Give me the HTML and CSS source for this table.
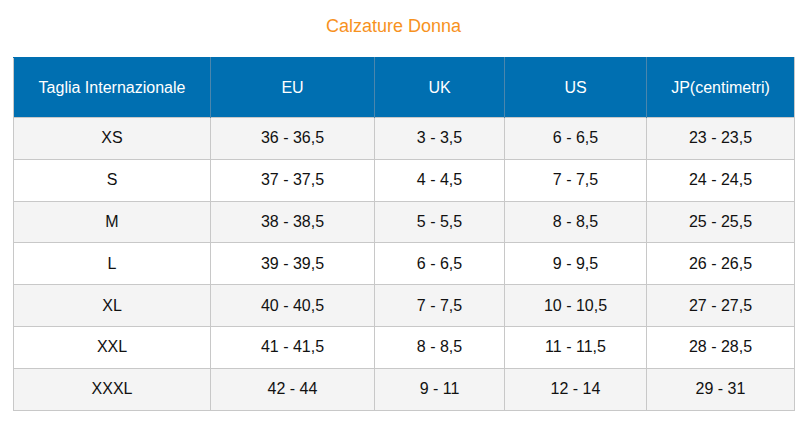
FILE: index.html
```html
<!DOCTYPE html>
<html lang="it">
<head>
<meta charset="utf-8">
<title>Calzature Donna</title>
<link rel="stylesheet" href="styles.css">
</head>
<body>
<div class="title">Calzature Donna</div>
<table class="sizes">
  <colgroup>
    <col class="c1"><col class="c2"><col class="c3"><col class="c4"><col class="c5">
  </colgroup>
  <thead>
    <tr><th>Taglia Internazionale</th><th>EU</th><th>UK</th><th>US</th><th>JP(centimetri)</th></tr>
  </thead>
  <tbody>
    <tr><td>XS</td><td>36 - 36,5</td><td>3 - 3,5</td><td>6 - 6,5</td><td>23 - 23,5</td></tr>
    <tr><td>S</td><td>37 - 37,5</td><td>4 - 4,5</td><td>7 - 7,5</td><td>24 - 24,5</td></tr>
    <tr><td>M</td><td>38 - 38,5</td><td>5 - 5,5</td><td>8 - 8,5</td><td>25 - 25,5</td></tr>
    <tr><td>L</td><td>39 - 39,5</td><td>6 - 6,5</td><td>9 - 9,5</td><td>26 - 26,5</td></tr>
    <tr><td>XL</td><td>40 - 40,5</td><td>7 - 7,5</td><td>10 - 10,5</td><td>27 - 27,5</td></tr>
    <tr><td>XXL</td><td>41 - 41,5</td><td>8 - 8,5</td><td>11 - 11,5</td><td>28 - 28,5</td></tr>
    <tr><td>XXXL</td><td>42 - 44</td><td>9 - 11</td><td>12 - 14</td><td>29 - 31</td></tr>
  </tbody>
</table>
</body>
</html>
```
FILE: styles.css
```css
html, body {
  margin: 0;
  padding: 0;
  background: #ffffff;
}
body {
  font-family: "Liberation Sans", Arial, Helvetica, sans-serif;
  color: #111111;
}
.title {
  padding: 15px 18px 0 0;
  height: 42px;
  line-height: 22px;
  font-size: 18px;
  color: #f7921e;
  text-align: center;
}
.sizes {
  margin-left: 13px;
  width: 781px;
  border-collapse: collapse;
  table-layout: fixed;
  font-size: 16px;
}
.c1 { width: 197px; }
.c2 { width: 164px; }
.c3 { width: 130px; }
.c4 { width: 142px; }
.c5 { width: 148px; }
.sizes th {
  height: 59px;
  padding: 0;
  background: #006fb1;
  color: #ffffff;
  font-weight: normal;
  text-align: center;
  border-left: 1px solid #4a86ad;
  border-right: 1px solid #4a86ad;
  border-top: 1px solid #006fb1;
}
.sizes th:first-child { border-left-color: #c8c8c8; }
.sizes th:last-child { border-right-color: #c8c8c8; }
.sizes td {
  height: 40.8px;
  padding: 0;
  text-align: center;
  border: 1px solid #c8c8c8;
}
.sizes tbody tr:nth-child(odd) td { background: #f4f4f4; }
.sizes tbody tr:nth-child(even) td { background: #ffffff; }
```
